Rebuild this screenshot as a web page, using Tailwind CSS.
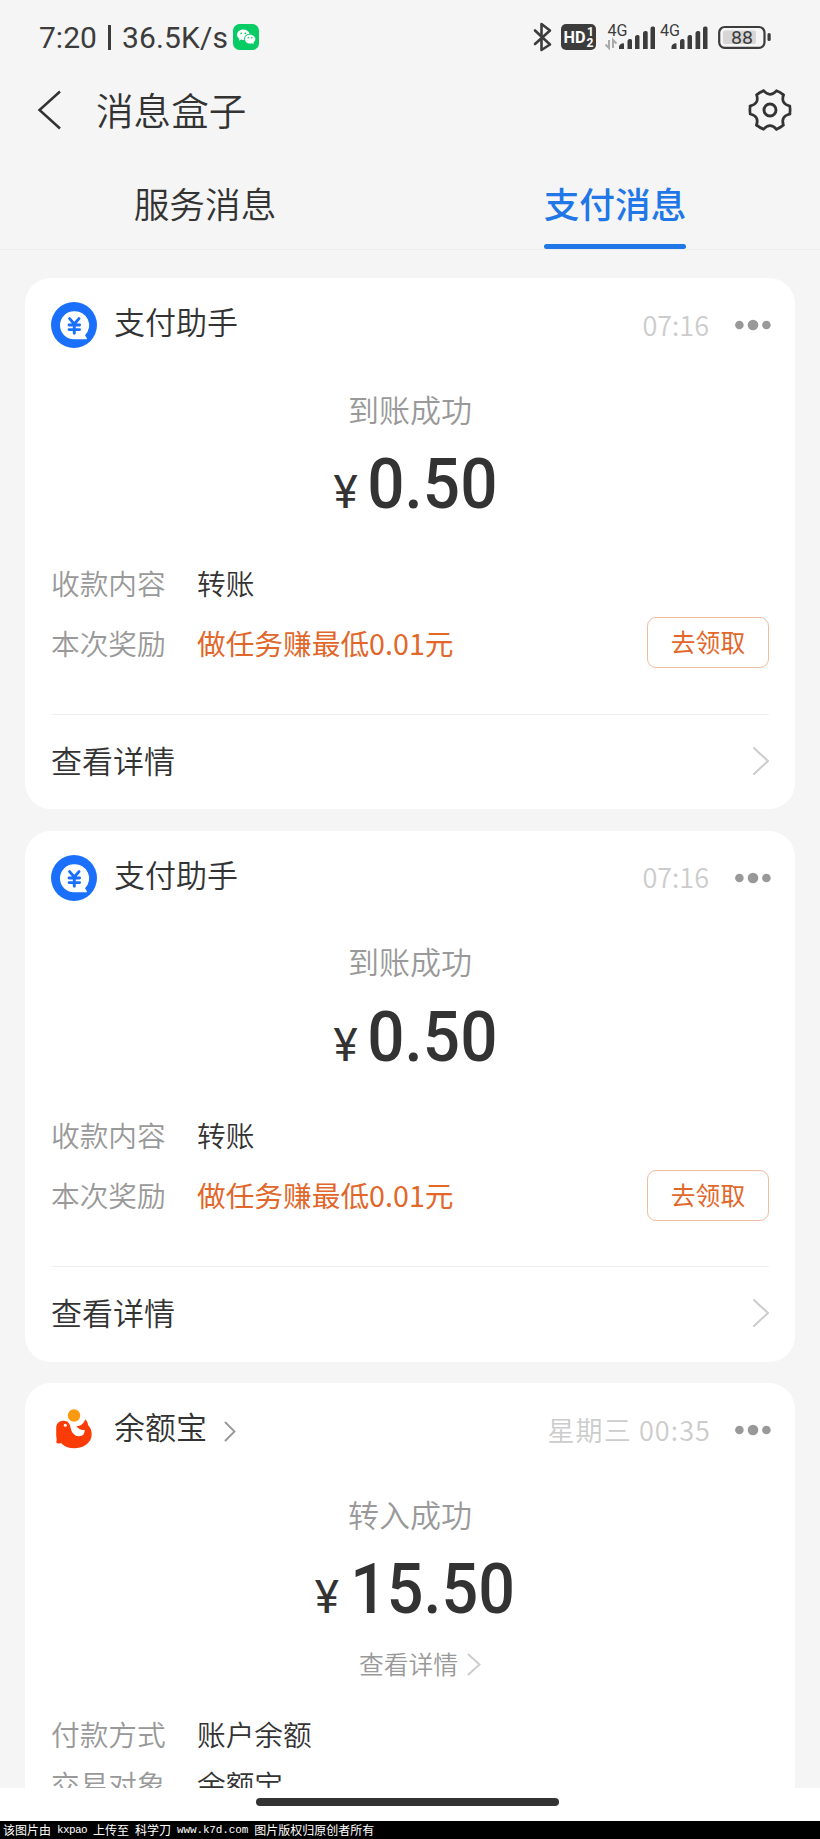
<!DOCTYPE html>
<html lang="zh-CN">
<head>
<meta charset="utf-8">
<title>消息盒子</title>
<script src="https://cdn.jsdelivr.net/npm/@tailwindcss/browser@4"></script>
</head>
<body class="w-[820px] h-[1839px] overflow-hidden bg-[#f5f5f5] text-[#333] font-['Noto_Sans_CJK_SC',sans-serif] font-[350] leading-none">

<svg width="0" height="0" class="hidden">
  <symbol id="assistant" viewBox="0 0 46 46">
    <circle cx="23" cy="23" r="23" fill="#1b70fb"/>
    <path d="M23 9.3a14 14 0 1 0 0 28H35.2a.8.8 0 0 0 .5-1.4L34 33.2A14 14 0 0 0 23 9.3Z" fill="#fff"/>
    <path d="M18.600 16.600 23.300 22 28 16.600M23.300 22V31.300M18 23H28.600M18 27.600H28.600" fill="none" stroke="#1b70fb" stroke-width="2.900" stroke-linecap="round"/>
  </symbol>
  <symbol id="whale" viewBox="0 0 46 46">
    <circle cx="23" cy="8.500" r="6.200" fill="#fb9a10"/>
    <path d="M5.200 22C5 16.500 8 13.800 12.500 13.700C17 13.700 18.800 16.500 19.500 20.500C20.500 25.500 23.500 29.300 28 29.300C31.800 29.300 34 26.500 33.600 22.800C31 23.500 27 22 25.500 19.300C29.500 19.300 32.500 17 34.200 12.600C36.300 14.300 37 16.500 37 18.300C40.300 21 41.300 26 40.300 30.500C38.300 37.500 31 41.200 23.500 41.200C17.500 41.200 13 39.500 10 36C8 37 6 36.800 5.200 35C5.800 33.500 5.800 32 5.200 29Z" fill="#fb3c07"/>
    <circle cx="14.300" cy="18.300" r="1.500" fill="#fff"/>
  </symbol>
  <symbol id="dots" viewBox="0 0 36 12">
    <g fill="#999"><circle cx="4.400" cy="6" r="4.300"/><circle cx="18" cy="6" r="5.300"/><circle cx="31.400" cy="6" r="4.300"/></g>
  </symbol>
  <symbol id="chev" viewBox="0 0 16 28">
    <path d="M1 1 15 14 1 27" fill="none" stroke="currentColor" stroke-width="2" stroke-linecap="round" stroke-linejoin="round"/>
  </symbol>
</svg>

<div class="flex flex-col w-full h-[1788px] overflow-hidden">
  <!-- status bar -->
  <div class="flex shrink-0 h-[74px] items-center justify-between pl-[39px] pr-[48px] font-['Roboto']">
    <div class="flex items-center text-[30px] font-normal text-[#3c3c3c]">
      <span class="w-[69px] pt-px">7:20</span><span class="w-[3px] h-[25px] bg-[#3c3c3c] mr-[11px]"></span><span class="w-[111px] pt-px tracking-[.15px]">36.5K/s</span>
      <svg width="26" height="26" viewBox="0 0 26 26">
        <rect width="26" height="26" rx="6.500" fill="#07cc66"/>
        <path d="M10.300 5.500C6.800 5.500 4 7.800 4 10.700C4 12.400 4.900 13.800 6.400 14.800L5.900 16.700L8.100 15.600C9 15.900 10 16 11 15.900C10.600 12.500 13.500 9.900 16.600 9.800C16 7.300 13.400 5.500 10.300 5.500Z" fill="#fff"/>
        <path d="M17 10.700C13.900 10.700 11.800 12.700 11.800 15.100C11.800 17.500 14 19.600 17 19.600C17.700 19.600 18.400 19.500 19 19.300L20.800 20.200L20.400 18.600C21.600 17.800 22.300 16.500 22.300 15.100C22.300 12.700 20 10.700 17 10.700Z" fill="#fff"/>
        <g fill="#07cc66"><circle cx="8.200" cy="9.300" r=".9"/><circle cx="12.400" cy="9.300" r=".9"/><circle cx="15.300" cy="13.700" r=".8"/><circle cx="18.800" cy="13.700" r=".8"/></g>
      </svg>
    </div>
    <svg width="240" height="30" viewBox="532 22 240 30" font-family="Roboto" font-weight="400" fill="#3c3c3c">
      <path d="M535 30.500 550 44.500 541.500 50V24L550 30.500 535 44" fill="none" stroke="#3c3c3c" stroke-width="2.600" stroke-linejoin="round" stroke-linecap="round"/>
      <rect x="561" y="24" width="35" height="26" rx="5"/>
      <text x="563.500" y="42.800" font-size="16" font-weight="700" fill="#fff" textLength="22" lengthAdjust="spacingAndGlyphs">HD</text>
      <text x="587" y="36" font-size="12" font-weight="700" fill="#fff">1</text>
      <text x="586.500" y="47" font-size="12" font-weight="700" fill="#fff">2</text>
      <text x="607.500" y="36" font-size="16" textLength="20" lengthAdjust="spacingAndGlyphs">4G</text>
      <text x="660" y="36" font-size="16" textLength="20" lengthAdjust="spacingAndGlyphs">4G</text>
      <path d="M609 40v8L605.500 44.500M613 48v-8L616.500 43.500" fill="none" stroke="#aaa" stroke-width="2"/>
      <path id="sig" d="M619 49V46.500a4 4 0 0 1 5-3V49ZM627.500 49V41q0-1.500 2-2h1q1.500 0 1.500 1.500V49ZM635 49V37q0-1.500 2-2h1q1.500 0 1.500 1.500V49ZM643 49V33q0-1.500 2-2h1.200q1.500 0 1.500 1.500V49ZM650.500 49V28.500q0-2 2-2h1q1.500 0 1.500 1.500V49Z"/>
      <use href="#sig" x="52.500"/>
      <rect x="719.200" y="27" width="45.300" height="20.800" rx="5.500" fill="none" stroke="#3c3c3c" stroke-width="2.200"/>
      <rect x="723" y="30.500" width="33" height="13.500" rx="2" fill="#d6d6d6"/>
      <text x="731" y="44" font-size="18.500" textLength="22" lengthAdjust="spacingAndGlyphs">88</text>
      <rect x="767.500" y="33" width="3.200" height="8" rx="1.500"/>
    </svg>
  </div>

  <!-- title bar -->
  <div class="flex shrink-0 h-[72px] items-center pl-[37px] pr-[28px]">
    <svg width="24" height="40" viewBox="0 0 24 40"><path d="M23 1.500 2.500 20 23 38.500" fill="none" stroke="#333" stroke-width="2.500"/></svg>
    <h1 class="ml-[35px] pb-[3px] text-[37.600px] font-[350]">消息盒子</h1>
    <svg class="ml-auto" width="44" height="44" viewBox="-22 -22 44 44" fill="none" stroke="#333" stroke-width="2.700" stroke-linecap="round">
      <circle r="6" stroke-width="2.900"/>
      <path id="tooth" d="M13.500 -15.300C11.500 -9 13.550 -5.460 19.800 -4Q20.500 0 19.800 4"/>
      <use href="#tooth" transform="rotate(60)"/><use href="#tooth" transform="rotate(120)"/><use href="#tooth" transform="rotate(180)"/><use href="#tooth" transform="rotate(240)"/><use href="#tooth" transform="rotate(300)"/>
    </svg>
  </div>

  <!-- tabs -->
  <div class="flex shrink-0 h-[104px] border-b border-[#eee] text-[35.700px]">
    <div class="flex-1 flex flex-col items-center pt-[39px]">服务消息</div>
    <div class="flex-1 flex flex-col items-center pt-[39px] font-medium text-[#2277e8]">支付消息<span class="mt-[23px] w-[142px] h-[5px] rounded-full bg-[#2277e8]"></span></div>
  </div>

  <main class="flex shrink-0 flex-col gap-[21.500px] pt-[28.400px] px-[25px]">
    <section class="shrink-0 h-[531px] rounded-[26px] bg-white px-[26px]">
      <div class="flex h-[94px] items-center">
        <svg width="46" height="46" class="mr-[17px]"><use href="#assistant"/></svg>
        <span class="text-[31px] pb-[9px]">支付助手</span>
        <span class="ml-auto mr-[26px] pb-[2px] text-[27px] text-[#ccc]">07:16</span>
        <svg width="36" height="12" class="-mr-[2px]"><use href="#dots"/></svg>
      </div>
      <div class="flex h-[76px] items-center justify-center pb-[4px] text-[31px] text-[#999]">到账成功</div>
      <div class="flex h-[71px] items-baseline justify-center pl-[16px] font-['Roboto'] font-medium">
        <span class="mr-[4px] text-[46px] font-normal">¥</span><span class="text-[71px]"><span class="inline-block scale-x-[.925]">0.50</span></span>
      </div>
      <div class="flex mt-[36px] h-[58px] items-center pb-[3px] text-[28.700px]"><span class="w-[146px] text-[#999]">收款内容</span><span>转账</span></div>
      <div class="flex h-[60px] items-center pb-px text-[28.700px]"><span class="w-[146px] text-[#999]">本次奖励</span><span class="font-normal text-[#e1672a]">做任务赚最低0.01元</span><button class="ml-auto h-[51px] w-[122px] rounded-[9px] border border-[#efbd9f] pb-[2px] text-[24.800px] font-normal text-[#e1672a]">去领取</button></div>
      <div class="mt-[41px] flex h-[95px] items-center justify-between border-t border-[#eee] pb-[2px] text-[31px]"><span class="pb-[4px]">查看详情</span><svg width="16" height="28" class="text-[#ccc]"><use href="#chev"/></svg></div>
    </section>

    <section class="shrink-0 h-[531px] rounded-[26px] bg-white px-[26px]">
      <div class="flex h-[94px] items-center">
        <svg width="46" height="46" class="mr-[17px]"><use href="#assistant"/></svg>
        <span class="text-[31px] pb-[9px]">支付助手</span>
        <span class="ml-auto mr-[26px] pb-[2px] text-[27px] text-[#ccc]">07:16</span>
        <svg width="36" height="12" class="-mr-[2px]"><use href="#dots"/></svg>
      </div>
      <div class="flex h-[76px] items-center justify-center pb-[4px] text-[31px] text-[#999]">到账成功</div>
      <div class="flex h-[71px] items-baseline justify-center pl-[16px] font-['Roboto'] font-medium">
        <span class="mr-[4px] text-[46px] font-normal">¥</span><span class="text-[71px]"><span class="inline-block scale-x-[.925]">0.50</span></span>
      </div>
      <div class="flex mt-[36px] h-[58px] items-center pb-[3px] text-[28.700px]"><span class="w-[146px] text-[#999]">收款内容</span><span>转账</span></div>
      <div class="flex h-[60px] items-center pb-px text-[28.700px]"><span class="w-[146px] text-[#999]">本次奖励</span><span class="font-normal text-[#e1672a]">做任务赚最低0.01元</span><button class="ml-auto h-[51px] w-[122px] rounded-[9px] border border-[#efbd9f] pb-[2px] text-[24.800px] font-normal text-[#e1672a]">去领取</button></div>
      <div class="mt-[40px] flex h-[96px] items-center justify-between border-t border-[#eee] pb-[2px] text-[31px]"><span class="pb-[4px]">查看详情</span><svg width="16" height="28" class="text-[#ccc]"><use href="#chev"/></svg></div>
    </section>

    <section class="shrink-0 h-[531px] rounded-[26px] bg-white px-[26px]">
      <div class="flex h-[94px] items-center">
        <svg width="46" height="46" class="mr-[17px]"><use href="#whale"/></svg>
        <span class="text-[31px] pb-[9px]">余额宝</span>
        <svg width="12" height="21" viewBox="0 0 12 21" class="ml-[17px] mt-[3px]"><path d="M1.500 1.500 10.500 10.500 1.500 19.500" fill="none" stroke="#999" stroke-width="1.900" stroke-linecap="round"/></svg>
        <span class="ml-auto mr-[24px] pb-[2px] text-[27px] tracking-[1.100px] text-[#ccc]">星期三 00:35</span>
        <svg width="36" height="12" class="-mr-[2px]"><use href="#dots"/></svg>
      </div>
      <div class="flex h-[76px] items-center justify-center pb-[4px] text-[31px] text-[#999]">转入成功</div>
      <div class="flex h-[71px] items-baseline justify-center pl-[18px] font-['Roboto'] font-medium">
        <span class="mr-[3px] text-[46px] font-normal">¥</span><span class="text-[71px]"><span class="inline-block scale-x-[.91]">15.50</span></span>
      </div>
      <div class="flex h-[81px] items-center justify-center pl-[20px] text-[24.800px] text-[#999]"><span class="pb-[2px]">查看详情</span><svg width="14" height="23" viewBox="0 0 14 23" class="ml-[9px]"><path d="M1.500 1.500 12.500 11.500 1.500 21.500" fill="none" stroke="#ccc" stroke-width="1.900" stroke-linecap="round"/></svg></div>
      <div class="flex h-[58px] items-center text-[28.700px]"><span class="w-[146px] text-[#999]">付款方式</span><span>账户余额</span></div>
      <div class="flex h-[42px] items-center text-[28.700px]"><span class="w-[146px] text-[#999]">交易对象</span><span>余额宝</span></div>
    </section>
  </main>
</div>

<!-- gesture area -->
<div class="flex h-[33px] justify-center bg-white pt-[10px] pr-[5px]"><div class="h-[8px] w-[303px] rounded-full bg-[#333]"></div></div>

<footer class="flex h-[18px] items-center gap-[6px] whitespace-nowrap bg-black pl-[3px] text-[12px] font-normal text-white">
  <span>该图片由</span><span class="font-['Liberation_Mono'] text-[11px] tracking-[-.6px]">kxpao</span><span>上传至</span><span>科学刀</span><span class="font-['Liberation_Mono'] text-[11px] tracking-[-.14px]">www.k7d.com</span><span>图片版权归原创者所有</span>
</footer>
</body>
</html>
